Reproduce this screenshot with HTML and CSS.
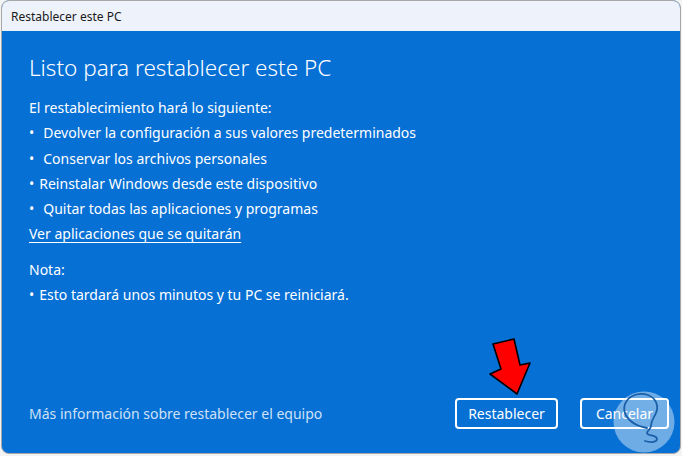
FILE: index.html
```html
<!DOCTYPE html>
<html lang="es">
<head>
<meta charset="utf-8">
<title>Restablecer este PC</title>
<link rel="stylesheet" href="styles.css">
</head>
<body>
<div class="window">
  <div class="titlebar">Restablecer este PC</div>
  <div class="content">
    <h1 class="heading">Listo para restablecer este PC</h1>
    <div class="lines">
      <p>El restablecimiento hará lo siguiente:</p>
      <p><span class="bullet">•</span><span class="gap"></span>Devolver la configuración a sus valores predeterminados</p>
      <p><span class="bullet">•</span><span class="gap"></span>Conservar los archivos personales</p>
      <p><span class="bullet">•</span><span class="gap-small"></span>Reinstalar Windows desde este dispositivo</p>
      <p><span class="bullet">•</span><span class="gap"></span>Quitar todas las aplicaciones y programas</p>
      <p><a class="link" href="#">Ver aplicaciones que se quitarán</a></p>
    </div>
    <div class="lines note">
      <p>Nota:</p>
      <p><span class="bullet">•</span><span class="gap-small"></span>Esto tardará unos minutos y tu PC se reiniciará.</p>
    </div>
    <div class="footer">
      <a class="more" href="#">Más información sobre restablecer el equipo</a>
      <div class="buttons">
        <button class="btn btn-primary">Restablecer</button>
        <button class="btn btn-cancel">Cancelar</button>
      </div>
    </div>
  </div>
  <svg class="arrow" width="60" height="70" viewBox="0 0 60 70">
    <polygon points="12,13 33,8 39,34 49,32 36,63 9,43 20,38" fill="#ff0000" stroke="#000" stroke-width="1.6" stroke-linejoin="round"/>
  </svg>
  <svg class="logo" width="66" height="66" viewBox="0 0 66 66">
    <circle cx="33" cy="33" r="30.5" fill="rgba(255,255,255,0.42)"/>
    <path d="M21 33 C14 28 11 20 15 13 C19 6 29 3 37 6 C45 9 48 17 45 24 C43 29 40 31 40 37 C40 40 36 42 36 44 C36 47 46 46 46 50 C46 53 40 54 34 52" fill="none" stroke="#1a5fa8" stroke-width="1.8" stroke-linecap="round" stroke-linejoin="round"/>
    <path d="M21 33 C26 37 31 38 36 39" fill="none" stroke="#1a5fa8" stroke-width="1.8" stroke-linecap="round"/>
  </svg>
</div>
</body>
</html>
```
FILE: styles.css
```css
html, body {
  margin: 0;
  padding: 0;
  background: #f3f3f3;
}
body {
  width: 682px;
  height: 456px;
  overflow: hidden;
  font-family: "Noto Sans", "Open Sans", sans-serif;
}
.window {
  position: relative;
  margin-left: 1px;
  width: 678px;
  height: 452px;
  border: 1px solid #a8a8a8;
  border-radius: 8px;
  overflow: hidden;
  display: flex;
  flex-direction: column;
  background: #0670d5;
}
.titlebar {
  height: 30px;
  flex: none;
  background: #eef2fa;
  color: #1a1a1a;
  font-size: 12px;
  display: flex;
  align-items: center;
  padding-left: 9px;
}
.content {
  flex: 1;
  display: flex;
  flex-direction: column;
  padding: 21px 0 0 27px;
  color: #ffffff;
}
.heading {
  margin: 0;
  font-size: 22.5px;
  font-weight: 300;
  line-height: 31px;
}
.lines {
  margin-top: 12px;
}
.lines p {
  margin: 0;
  font-size: 14px;
  line-height: 25.3px;
  white-space: nowrap;
}
.note {
  margin-top: 10px;
}
.bullet {
  display: inline-block;
}
.gap {
  display: inline-block;
  width: 9px;
}
.gap-small {
  display: inline-block;
  width: 5px;
}
.link {
  color: #ffffff;
  text-decoration: underline;
  text-underline-offset: 3px;
  text-decoration-thickness: 1px;
}
.footer {
  margin-top: auto;
  display: flex;
  align-items: center;
  justify-content: space-between;
  padding: 0 11px 24px 0;
}
.more {
  color: #cfe1f6;
  font-size: 14px;
  text-decoration: none;
}
.buttons {
  display: flex;
  gap: 22px;
}
.btn {
  height: 31px;
  border: 2px solid #ffffff;
  border-radius: 4px;
  color: #ffffff;
  font-family: inherit;
  font-size: 14px;
  background: transparent;
  padding: 0;
}
.btn-primary {
  width: 103px;
}
.btn-cancel {
  width: 89px;
  background: rgba(255,255,255,0.04);
}
.arrow {
  position: absolute;
  left: 479px;
  top: 330px;
}
.logo {
  position: absolute;
  left: 609px;
  top: 388px;
}
```
